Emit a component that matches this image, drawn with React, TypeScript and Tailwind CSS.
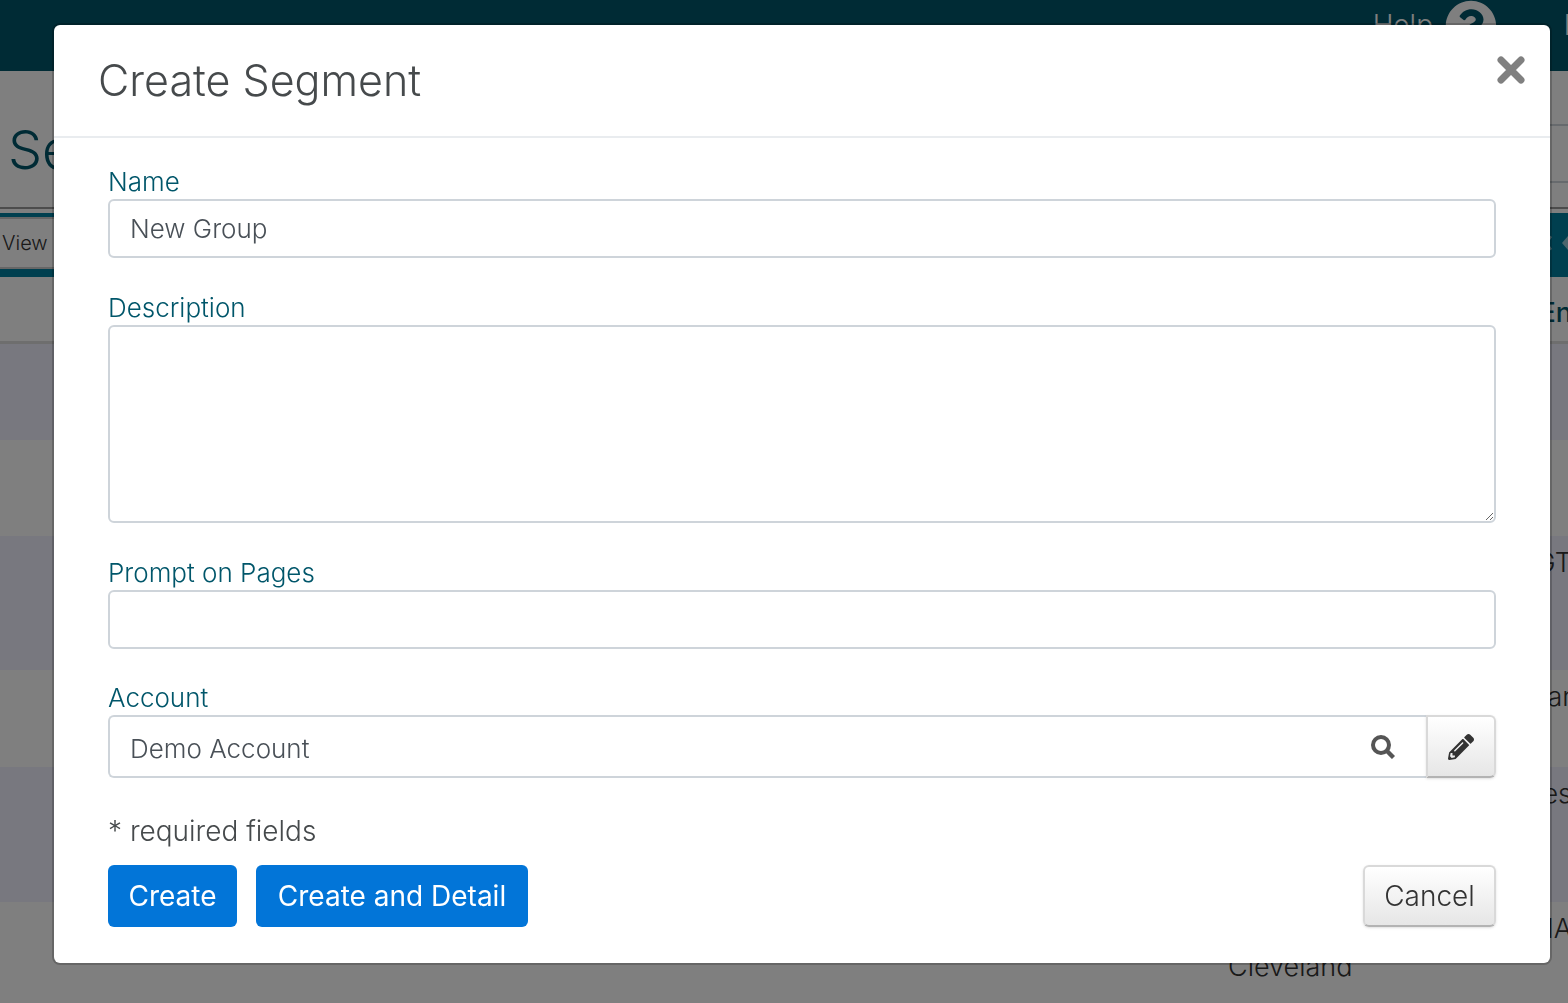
import { useState } from 'react'
import { FaPencilAlt, FaQuestionCircle } from 'react-icons/fa'
import clsx from 'clsx'

const rows = [
  { height: 'h-24', city: '', state: '' },
  { height: 'h-24', city: '', state: '' },
  { height: 'h-[134px]', city: '', state: 'GT' },
  { height: 'h-[97px]', city: '', state: 'ar' },
  { height: 'h-[135px]', city: '', state: 'es' },
  { height: 'h-[134px]', city: 'Cleveland', state: 'MA' },
]

const fieldClass =
  'block w-full rounded-md border-2 border-[#ced4da] bg-white px-5 text-[26px] font-light text-[#495057] outline-none'
const labelClass = 'block pt-px text-[26px] leading-[35px] font-light text-[#00566a]'
const greyButton =
  'rounded-md border-2 border-[#d9d9d9] border-b-[#b3b3b3] bg-linear-to-b from-white to-[#e6e6e6] text-[#333333] shadow-sm'

function SearchIcon() {
  return (
    <svg viewBox="0 0 24 24" className="size-6" fill="none" stroke="currentColor" aria-hidden="true">
      <circle cx="10" cy="10" r="8" strokeWidth="4" />
      <path d="M15.5 15.5 22.5 22.5" strokeWidth="4.4" />
    </svg>
  )
}

function CloseIcon() {
  return (
    <svg viewBox="0 0 28 28" className="size-7" fill="none" stroke="currentColor" strokeWidth="7" strokeLinecap="round" aria-hidden="true">
      <path d="M4 4 24 24M24 4 4 24" />
    </svg>
  )
}

function SegmentsPage() {
  return (
    <div className="h-screen overflow-hidden bg-white text-[#333333]" aria-hidden="true">
      {/* Top bar */}
      <header className="flex h-[71px] items-start justify-end bg-[#00566a] text-[28px] font-light text-white">
        <span className="mr-3 leading-[50px]">Help</span>
        <FaQuestionCircle size={52} className="mr-[67px]" />
        <span className="w-1 leading-[50px]">l</span>
      </header>

      {/* Title */}
      <div className="flex h-[138px] items-center justify-between border-b-2 border-[#999999] pl-2">
        <h2 className="pt-5 text-[54px] font-light text-[#00566a]">Segments</h2>
        <div className="mt-7 h-[59px] w-10 border-y-2 border-[#ced4da]" />
      </div>

      {/* Toolbar */}
      <div className="mt-1 flex h-16 items-center justify-between bg-[#007e9f] pb-1">
        <div className="flex h-[52px] w-40 items-center border-y-2 border-[#cccccc] bg-white pl-0.5 text-[20px] font-light">View</div>
        <svg viewBox="0 0 22 24" className="h-6 w-[22px] text-white/60" fill="currentColor">
          <path d="M0 2 6 6 2 12 6 18 0 22Z" />
          <path d="M16 12 22 5V19Z" />
        </svg>
      </div>

      {/* Table */}
      <div className="-mr-1">
        <div className="flex h-[67px] items-center justify-end border-b-3 border-[#dddddd] pt-2 text-[27px] font-medium text-[#00566a]">En</div>
        {rows.map((row, i) => (
          <div
            key={i}
            className={clsx(
              'grid grid-cols-[1fr_260px_84px] pt-2 text-[27px] leading-[38px] font-light',
              row.height,
              i % 2 === 0 && 'bg-[#f0f0ff]'
            )}
          >
            <span />
            <span className="self-start pt-[38px]">{row.city}</span>
            <span className="text-right">{row.state}</span>
          </div>
        ))}
      </div>
    </div>
  )
}

export default function App() {
  const [name, setName] = useState('New Group')
  const [account, setAccount] = useState('Demo Account')

  return (
    <div className="font-['Inter',sans-serif]">
      <SegmentsPage />

      <div className="fixed inset-0 overflow-hidden bg-black/50 pt-[25px] pr-[18px] pl-[54px]">
        <div role="dialog" aria-labelledby="dialog-title" className="rounded-md bg-white ring-2 ring-black/20">
          {/* Header */}
          <div className="flex h-[113px] items-start justify-between border-b-2 border-[#e9ecef] pr-[25px] pl-11">
            <h1 id="dialog-title" className="pt-[25px] text-[43px] leading-[60px] font-light text-[#464a4c]">Create Segment</h1>
            <button type="button" aria-label="Close" className="mt-[31px] text-[#808080]">
              <CloseIcon />
            </button>
          </div>

          {/* Body */}
          <form className="px-[54px] pt-[25px] pb-9" onSubmit={(e) => e.preventDefault()}>
            <div className="space-y-[31px]">
              <div>
                <label htmlFor="name" className={labelClass}>Name</label>
                <input id="name" value={name} onChange={(e) => setName(e.target.value)} className={clsx(fieldClass, 'h-[59px]')} />
              </div>
              <div>
                <label htmlFor="description" className={labelClass}>Description</label>
                <textarea id="description" className={clsx(fieldClass, 'h-[198px] py-2')} />
              </div>
              <div>
                <label htmlFor="prompt" className={labelClass}>Prompt on Pages</label>
                <input id="prompt" className={clsx(fieldClass, 'h-[59px]')} />
              </div>
            </div>

            <div className="mt-[30px]">
              <label htmlFor="account" className={labelClass}>Account</label>
              <div className="flex h-[63px]">
                <div className="flex flex-1 items-center rounded-l-md border-2 border-r-0 border-[#ced4da] pr-[31px] pl-5">
                  <input
                    id="account"
                    value={account}
                    onChange={(e) => setAccount(e.target.value)}
                    className="h-full min-w-0 flex-1 pt-1 text-[26px] font-light text-[#495057] outline-none"
                  />
                  <button type="button" aria-label="Search" className="text-[#555555]">
                    <SearchIcon />
                  </button>
                </div>
                <button type="button" aria-label="Edit" className={clsx(greyButton, 'flex w-[70px] items-center justify-center rounded-l-none')}>
                  <FaPencilAlt size={26} />
                </button>
              </div>
            </div>

            <p className="pt-[34px] pb-3.5 text-[28px] leading-[39px] font-light text-[#464a4c]">* required fields</p>
            <div className="flex h-[62px] gap-[19px] text-[28px]">
              <button type="submit" className="w-[129px] rounded-md bg-[#0275d8] text-white">Create</button>
              <button type="submit" className="w-[272px] rounded-md bg-[#0275d8] text-white">Create and Detail</button>
              <button type="button" className={clsx(greyButton, 'ml-auto w-[133px] font-light')}>Cancel</button>
            </div>
          </form>
        </div>
      </div>
    </div>
  )
}
